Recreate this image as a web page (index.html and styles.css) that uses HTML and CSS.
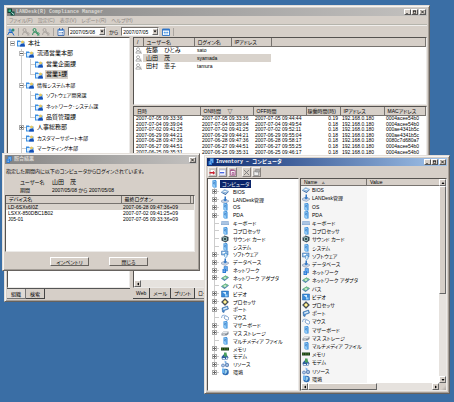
FILE: index.html
```html
<!DOCTYPE html>
<html lang="ja">
<head>
<meta charset="utf-8">
<title>LANDesk(R) Compliance Manager</title>
<link rel="stylesheet" href="styles.css">
</head>
<body>
<svg class="sprite" aria-hidden="true">
  <symbol id="i-dept" viewBox="0 0 16 16"><path d="M0 3h6l1 2h8v10H0z" fill="#3f8fe0"/><path d="M2 6h10v7H2z" fill="#d9efff"/><circle cx="11" cy="6" r="3" fill="#e8c860"/><path d="M6 15q0-6 5-6t5 6z" fill="#1650b8"/></symbol>
  <symbol id="i-user" viewBox="0 0 16 16"><circle cx="7" cy="5" r="3.5" fill="#fff" stroke="#888" stroke-width="1.5"/><path d="M2 14q0-5 5-5t5 5zM13 8v6h3" fill="#fff" stroke="#888" stroke-width="1.5"/></symbol>
  <symbol id="i-logo" viewBox="0 0 16 16"><path d="M1 1h9v9H1z" fill="#103c30"/><path d="M3 3h5v5H3z" fill="#34b890"/><path d="M7 7h8v8H7z" fill="#0b5444"/><path d="M9 9l5 4" stroke="#dff" stroke-width="2"/></symbol>
  <symbol id="i-key" viewBox="0 0 16 16"><path d="M1 14L8 4l2 4 4 7M3 9h7" fill="none" stroke="#2368c4" stroke-width="2"/><circle cx="6" cy="4" r="3" fill="#5698e8"/><circle cx="12" cy="4" r="3" fill="#2c8a78"/></symbol>
  <symbol id="i-people" viewBox="0 0 16 16"><circle cx="5" cy="4" r="3" fill="none" stroke="currentColor" stroke-width="2"/><path d="M1 14q0-6 5-6 3 0 4 4M8 6l5 8M10 14h5M11 9l4 2" fill="none" stroke="currentColor" stroke-width="2"/></symbol>
  <symbol id="i-cal" viewBox="0 0 16 16"><path d="M2 3h12v12H2z" fill="#fff" stroke="#2459a6" stroke-width="1.6"/><path d="M2 3h12v3H2z" fill="#6fa5e0"/><path d="M5 0v4M11 0v4M5 9h2M9 9h3M5 12h2M9 12h3" stroke="#2459a6" stroke-width="1.6"/></symbol>
  <symbol id="i-grid" viewBox="0 0 16 16"><path d="M1 2h14v13H1z" fill="#fff" stroke="#2e74c8" stroke-width="1.8"/><path d="M1 2h14v3H1z" fill="#2e74c8"/><path d="M4 8h3v2H4zM9 8h3v2H9zM4 12h8" fill="#58a0ea" stroke="#58a0ea"/></symbol>
  <symbol id="i-pc" viewBox="0 0 16 16"><path d="M5 1l6-1 2 2v13H7l-2-2z" fill="#2b83d6"/><path d="M5 1l6 1v13l-6-2z" fill="#90caf6"/><path d="M6 4l4 1M6 7l4 1" stroke="#1d5fae" stroke-width="1.2"/></symbol>
  <symbol id="i-bios" viewBox="0 0 16 16"><path d="M0 9l7-6 9 4-7 7z" fill="#2a5c9c"/><path d="M0 8l7-6 9 4-7 6z" fill="#b5d2ec"/><ellipse cx="8" cy="7" rx="4" ry="2" fill="#fff" stroke="#4c86be"/></symbol>
  <symbol id="i-mgmt" viewBox="0 0 16 16"><path d="M1 9l7-3 8 4-7 5-8-3z" fill="#c9d4e4" stroke="#6d84a8"/><path d="M7 1h3v5l2 2-4 3-3-3 2-2z" fill="#3478c6"/></symbol>
  <symbol id="i-keyboard" viewBox="0 0 16 16"><path d="M1 4h14l1 8H0z" fill="#7da3cf"/><path d="M1 6h14M1 8h14M1 10h14M4 4v7M8 4v7M12 4v7" stroke="#e0ecf8" stroke-width=".8"/></symbol>
  <symbol id="i-sound" viewBox="0 0 16 16"><path d="M1 5l6-4 8 3v7l-6 4-8-4z" fill="#364550"/><circle cx="8" cy="8" r="4.5" fill="#8fb4b4"/><circle cx="8" cy="8" r="2" fill="#1c3030"/><path d="M2 5l5-3" stroke="#b9cccc" stroke-width="1.5"/></symbol>
  <symbol id="i-soft" viewBox="0 0 16 16"><path d="M1 2h13v8H1z" fill="#86b7e4" stroke="#2c66a8"/><path d="M3 4h5v3H3z" fill="#fff"/><path d="M7 7h5v7l-3 1-2-2z" fill="#d8ecfa" stroke="#2c7fc4"/></symbol>
  <symbol id="i-net" viewBox="0 0 16 16"><path d="M6 1h7v9H6z" fill="#64aaf0" stroke="#2468b8"/><path d="M3 6h7v8H3z" fill="#2d7cd6"/><path d="M5 8h3M5 11h3" stroke="#d6ebff"/></symbol>
  <symbol id="i-card" viewBox="0 0 16 16"><path d="M0 9l9-6 7 4-9 7z" fill="#4a78b8"/><path d="M1 8l8-5 6 3-8 6z" fill="#74c088"/><path d="M5 8l3-2 3 2-3 2z" fill="#dcf2e0"/></symbol>
  <symbol id="i-video" viewBox="0 0 16 16"><path d="M1 2h14v12H1z" fill="#3a8ad8" stroke="#1f5fa8"/><path d="M3 4h7v6z" fill="#d4ecff"/><path d="M8 9h5v4H8z" fill="#9ad0f8"/></symbol>
  <symbol id="i-cpu" viewBox="0 0 16 16"><path d="M8 1l7 7-7 7-7-7z" fill="#3a4654" stroke="#202c3c"/><path d="M8 4l4 4-4 4-4-4z" fill="#fff2a0" stroke="#c0aa40"/></symbol>
  <symbol id="i-port" viewBox="0 0 16 16"><path d="M2 6l11-4 2 6-8 3-1 4-3-1z" fill="#4b8ed0" stroke="#265a98"/><path d="M4 7l8-3 1 3-8 3z" fill="#d8eaf8"/></symbol>
  <symbol id="i-mouse" viewBox="0 0 16 16"><path d="M1 10q0-7 6-6l3 3" fill="none" stroke="#6896cc" stroke-width="1.5"/><ellipse cx="11" cy="10" rx="5" ry="3.5" transform="rotate(35 11 10)" fill="#fff" stroke="#5a88c0" stroke-width="1.4"/></symbol>
  <symbol id="i-disk" viewBox="0 0 16 16"><path d="M1 9l4-4h10v5l-4 3H1z" fill="#848c96"/><path d="M1 9l4-4h10l-4 4z" fill="#e6e9ec"/><path d="M3 11h5" stroke="#fff"/></symbol>
  <symbol id="i-mem" viewBox="0 0 16 16"><path d="M0 5h16v6H0z" fill="#173c14"/><path d="M1 7h3v2H1zM6 7h3v2H6zM11 7h3v2h-3z" fill="#5c8c34"/></symbol>
  <symbol id="i-modem" viewBox="0 0 16 16"><path d="M1 10l4-5h6l4 6-2 4H2z" fill="#2f5e9c"/><path d="M6 1h5l1 8H6z" fill="#48a05c"/><path d="M3 12h5v2H3zM10 11h3v3h-3z" fill="#e4f0fc"/></symbol>
  <symbol id="i-res" viewBox="0 0 16 16"><path d="M7 1l5 3-4 4z" fill="#78b0e8"/><circle cx="4" cy="11" r="3" fill="#d9e7f8" stroke="#4471b4" stroke-width="1.4"/><circle cx="12" cy="10" r="3.5" fill="#c2d8f2" stroke="#34609c" stroke-width="1.4"/><path d="M4 9v4M12 8v4" stroke="#34609c"/></symbol>
  <symbol id="i-env" viewBox="0 0 16 16"><circle cx="9" cy="8" r="6.5" fill="#2e6cb4"/><path d="M8 3l5 2-2 5-4 3z" fill="#9ed0e8"/><path d="M2 1h5v9H2z" fill="#6db4f0"/></symbol>
  <symbol id="i-export" viewBox="0 0 16 16"><path d="M3 1h8l3 3v11H3z" fill="#fff" stroke="#999"/><path d="M1 7h8V4l5 5-5 4v-3H1z" fill="#c82030"/></symbol>
  <symbol id="i-mail" viewBox="0 0 16 16"><path d="M1 2h14v12H1z" fill="#fff" stroke="#7b8cd8"/><path d="M2 7h10v3H2z" fill="#3c5ce0"/></symbol>
  <symbol id="i-prop" viewBox="0 0 16 16"><path d="M3 3h11v11H3z" fill="#fff" stroke="#8c2a70" stroke-width="1.6"/><path d="M5 0v5M9 0v5M7 8h4v4H7z" stroke="#8c2a70" stroke-width="1.5" fill="none"/></symbol>
  <symbol id="i-cut" viewBox="0 0 16 16"><path d="M2 2l12 12M14 2L2 14" stroke="#777" stroke-width="2"/></symbol>
  <symbol id="i-note" viewBox="0 0 16 16"><path d="M2 5h11v10H2z" fill="#eee" stroke="#777" stroke-width="1.5"/><path d="M6 1h9v6H6z" fill="#aaa" stroke="#777"/></symbol>
  <symbol id="i-plus" viewBox="0 0 5 5"><path d="M0 0h5v5H0z" fill="#aaa"/><path d="M1 1h3v3H1z" fill="#fff"/><path d="M1 2h3v1H1zM2 1h1v3H2z" fill="#666"/></symbol>
  <symbol id="i-minus" viewBox="0 0 5 5"><path d="M0 0h5v5H0z" fill="#bbb"/><path d="M1 1h3v3H1z" fill="#fff"/><path d="M1 2h3v1H1z" fill="#666"/></symbol>
  <symbol id="i-min" viewBox="0 0 8 8"><path d="M1 6h4v1H1z"/></symbol>
  <symbol id="i-max" viewBox="0 0 8 8"><path d="M1 1h6v6H1zM2 3v3h4V3z" fill-rule="evenodd"/></symbol>
  <symbol id="i-close" viewBox="0 0 8 8"><path d="M1 1l6 6M7 1L1 7" stroke="#000" stroke-width="1.5"/></symbol>
  <symbol id="i-left" viewBox="0 0 8 8"><path d="M6 1v6L2 4z"/></symbol>
  <symbol id="i-right" viewBox="0 0 8 8"><path d="M2 1v6l4-3z"/></symbol>
  <symbol id="i-up" viewBox="0 0 8 8"><path d="M1 6h6L4 2z"/></symbol>
  <symbol id="i-down" viewBox="0 0 8 8"><path d="M1 2h6L4 6z"/></symbol>
</svg>

<main class="desktop">
  <section class="window main-window">
    <header class="titlebar">
      <svg class="icon"><use href="#i-logo"/></svg>
      <h1>LANDesk(R) Compliance Manager</h1>
      <button class="cap" aria-label="最小化"><svg><use href="#i-min"/></svg></button>
      <button class="cap" aria-label="最大化"><svg><use href="#i-max"/></svg></button>
      <button class="cap cap-close" aria-label="閉じる"><svg><use href="#i-close"/></svg></button>
    </header>
    <nav class="menu">
      <button>ファイル(F)</button><button>設定(C)</button><button>表示(V)</button><button>レポート(R)</button><button>ヘルプ(H)</button>
    </nav>
    <div class="toolbar">
      <button class="tool" aria-label="ログイン"><svg class="icon"><use href="#i-key"/></svg></button>
      <i class="sep"></i>
      <button class="tool off" aria-label="ユーザー"><svg class="icon"><use href="#i-people"/></svg></button>
      <button class="tool green" aria-label="追加"><svg class="icon"><use href="#i-people"/></svg></button>
      <button class="tool off" aria-label="削除"><svg class="icon"><use href="#i-people"/></svg></button>
      <i class="sep"></i>
      <button class="tool" aria-label="カレンダー"><svg class="icon"><use href="#i-cal"/></svg></button>
      <span class="date"><select aria-label="開始日"><option>2007/05/08</option></select><svg><use href="#i-down"/></svg></span>
      <span class="between">から</span>
      <span class="date"><select aria-label="終了日"><option>2007/07/05</option></select><svg><use href="#i-down"/></svg></span>
      <button class="tool" aria-label="表示"><svg class="icon"><use href="#i-grid"/></svg></button>
      <i class="sep"></i>
    </div>
    <div class="panes">
      <div class="side">
        <div class="sunken side-body"><ul class="org" id="org"></ul></div>
        <div class="tabs"><button class="on">組織</button><button>検索</button></div>
      </div>
      <div class="content">
        <div class="sunken users">
          <table>
            <colgroup><col class="u0"><col class="u1"><col class="u2"><col class="u3"><col></colgroup>
            <thead><tr><th>/</th><th>ユーザー名</th><th>ログイン名</th><th>IPアドレス</th><th></th></tr></thead>
            <tbody>
              <tr><td><svg class="icon"><use href="#i-user"/></svg></td><td>佐藤　ひとみ</td><td>sato</td><td></td><td></td></tr>
              <tr class="picked"><td><svg class="icon"><use href="#i-user"/></svg></td><td>山田　茂</td><td>syamada</td><td></td><td></td></tr>
              <tr><td><svg class="icon"><use href="#i-user"/></svg></td><td>田村　恵子</td><td>tamura</td><td></td><td></td></tr>
            </tbody>
          </table>
        </div>
        <div class="sunken logs">
          <table>
            <colgroup><col class="l0"><col class="l1"><col class="l1"><col class="l3"><col class="l4"><col></colgroup>
            <thead><tr><th>日時</th><th>ON時間　 ▽</th><th>OFF時間</th><th>稼働時間(時)</th><th>IPアドレス</th><th>MACアドレス</th></tr></thead>
            <tbody id="logs"></tbody>
          </table>
          <div class="hscroll"><button aria-label="左へ"><svg><use href="#i-left"/></svg></button></div>
        </div>
        <div class="tabs"><button>Web</button><button>メール</button><button>プリント</button><button class="on">ログイン</button></div>
      </div>
    </div>
  </section>

  <section class="window dialog">
    <header class="titlebar">
      <svg class="icon"><use href="#i-net"/></svg>
      <h2>照合結果</h2>
      <button class="cap cap-close" aria-label="閉じる"><svg><use href="#i-close"/></svg></button>
    </header>
    <p>指定した期間内に以下のコンピュータからログインされています。</p>
    <dl><dt>ユーザー名</dt><dd>山田　茂</dd><dt>期間</dt><dd class="period">2007/05/08 から 2007/05/08</dd></dl>
    <div class="sunken devices">
      <table>
        <colgroup><col class="d0"><col class="d1"><col></colgroup>
        <thead><tr><th>デバイス名</th><th>最終ログオン</th><th></th></tr></thead>
        <tbody>
          <tr class="picked"><td>LD-6SXs6I0Z</td><td colspan="2">2007-06-28 09:47:36+09</td></tr>
          <tr><td>LSXX-850DBC1B02</td><td colspan="2">2007-07-02 09:41:25+09</td></tr>
          <tr><td>J05-01</td><td colspan="2">2007-07-05 09:33:36+09</td></tr>
        </tbody>
      </table>
    </div>
    <footer><button>インベントリ</button><button>閉じる</button></footer>
  </section>

  <section class="window inventory">
    <header class="titlebar active">
      <svg class="icon"><use href="#i-net"/></svg>
      <h2>Inventory − コンピュータ</h2>
      <button class="cap" aria-label="最小化"><svg><use href="#i-min"/></svg></button>
      <button class="cap" aria-label="最大化"><svg><use href="#i-max"/></svg></button>
      <button class="cap cap-close" aria-label="閉じる"><svg><use href="#i-close"/></svg></button>
    </header>
    <div class="inv-tools">
      <button aria-label="エクスポート"><svg class="icon"><use href="#i-export"/></svg></button>
      <button aria-label="メール"><svg class="icon"><use href="#i-mail"/></svg></button>
      <button aria-label="印刷"><svg class="icon"><use href="#i-prop"/></svg></button>
      <button class="apart" aria-label="削除"><svg class="icon"><use href="#i-cut"/></svg></button>
      <button aria-label="プロパティ"><svg class="icon"><use href="#i-note"/></svg></button>
    </div>
    <div class="inv-panes">
      <div class="sunken inv-left"><ul class="inv-tree" id="invTree"></ul></div>
      <div class="sunken inv-right">
        <div class="inv-list">
          <div class="inv-head"><span>Name　▵</span><span>Value</span></div>
          <ul id="invList"></ul>
        </div>
        <div class="vscroll"><button aria-label="上へ"><svg><use href="#i-up"/></svg></button><i></i><b></b><button aria-label="下へ"><svg><use href="#i-down"/></svg></button></div>
        <div class="hscroll"><button aria-label="左へ"><svg><use href="#i-left"/></svg></button><i></i><b></b><button aria-label="右へ"><svg><use href="#i-right"/></svg></button></div>
        <div class="grip"></div>
      </div>
    </div>
  </section>
</main>
<script src="script.js"></script>
</body>
</html>
```
FILE: styles.css
```css
* { box-sizing: border-box; margin: 0; padding: 0; }
body {
  background: #3a6ea5;
  color: #000;
  font: 5px/6px "Liberation Sans", "Noto Sans CJK JP", sans-serif;
  font-feature-settings: "palt";
  overflow: hidden;
}
button, select { font: inherit; color: inherit; border: 0; background: none; }
ul { list-style: none; }
h1, h2 { font: bold 5px/7px "Liberation Mono", "Noto Sans CJK JP", monospace; }
table { width: 100%; border-collapse: collapse; table-layout: fixed; }
th, td { text-align: left; font-weight: normal; white-space: nowrap; overflow: hidden; }
.sprite { position: absolute; width: 0; height: 0; }
.icon { width: 8px; height: 8px; flex: none; display: block; }
.desktop { position: relative; height: 100vh; }

.window {
  position: absolute;
  display: flex;
  flex-direction: column;
  background: #d6cfc8;
  border: 1px solid;
  border-color: #e4dfda #66625e #66625e #e4dfda;
  box-shadow: inset 1px 1px #f6f4f2, inset -1px -1px #a39d97;
  padding: 2px;
}
.main-window { left: 4px; top: 5px; width: 426px; height: 297px; }
.dialog { left: 2px; top: 153px; width: 198px; height: 118px; padding: 1px 2px; }
.inventory { left: 204px; top: 155px; width: 246px; height: 239px; }

.titlebar {
  display: flex;
  align-items: center;
  height: 8px;
  flex: none;
  background: linear-gradient(90deg, #858483, #a5a4a3 50%, #c3c1bf);
  color: #dad7d3;
}
.titlebar.active { background: linear-gradient(90deg, #0c2a70, #a2c4ea); color: #fff; }
.dialog .titlebar { height: 9px; }
.titlebar h1, .titlebar h2 { flex: 1; margin-left: 1px; white-space: nowrap; }
.cap { width: 7px; height: 6px; display: grid; place-items: center; background: #d6cfc8; border: 1px solid; border-color: #fff #555 #555 #fff; }
.cap svg { width: 5px; height: 4px; }
.cap-close { margin: 0 1px; }

.menu { display: flex; gap: 5px; padding: 1px 2px; height: 9px; flex: none; color: #8e8984; border-bottom: 1px solid #b5b4ac; }
.toolbar { display: flex; align-items: center; gap: 2px; height: 12px; flex: none; border-top: 1px solid #f0eeec; }
.tool { width: 8px; height: 8px; }
.off { color: #aaa5a0; }
.green { color: #2f9160; }
.sep { width: 1px; height: 8px; margin: 0 1px; background: #aaa5a0; }
.date { position: relative; width: 38px; height: 9px; margin: 0 1px; background: #fff; border: 1px solid; border-color: #77736f #eee #eee #77736f; }
.date select { appearance: none; display: block; width: 100%; height: 7px; padding-left: 1px; line-height: 6px; }
.date svg { position: absolute; right: 0; top: 0; width: 6px; height: 7px; background: #d6cfc8; border: 1px solid; border-color: #fff #666 #666 #fff; pointer-events: none; }
.between { white-space: nowrap; }

.sunken { background: #fff; border: 1px solid; border-color: #55524f #eceae8 #eceae8 #55524f; overflow: hidden; }
.panes { display: flex; gap: 3px; flex: 1; min-height: 0; }
.side { width: 123px; display: flex; flex-direction: column; }
.side-body { flex: 1; }
.content { flex: 1; min-width: 0; display: flex; flex-direction: column; }
.tabs { display: flex; height: 11px; flex: none; }
.side .tabs { border-top: 1px solid #555; }
.tabs button { padding: 0 3px; border: solid #444; border-width: 0 1px 1px 0; }
.side .tabs button { padding: 0 4px; }
.tabs .on { border-color: #777; background: #e0dbd6; }

.org { display: grid; grid-auto-rows: 1fr; height: 116px; }
.org li, .inv-tree li { display: flex; align-items: stretch; min-height: 0; }
.org .icon, .inv-tree .icon { align-self: center; }
.org .label { align-self: center; margin-left: 2px; padding: 1px; font-size: 6px; line-height: 7px; white-space: nowrap; }
.org .small { font-size: 5px; }
.cell { width: 9px; flex: none; display: grid; place-items: center; background: 4px 0 / 1px 100% no-repeat; }
.cell svg { width: 5px; height: 5px; }
.line { background-image: linear-gradient(#ccc, #ccc); }
.tee { background: linear-gradient(#ccc, #ccc) 4px 0 / 1px 100% no-repeat, linear-gradient(#ccc, #ccc) 4px 50% / 5px 1px no-repeat; }
.end { background: linear-gradient(#ccc, #ccc) 4px 0 / 1px 50% no-repeat, linear-gradient(#ccc, #ccc) 4px 50% / 5px 1px no-repeat; }
.label.chosen { background: #d6cfc8; }

thead th { height: 8px; padding-left: 3px; background: #d6cfc8; border-right: 1px solid #77736f; border-bottom: 1px solid #77736f; }
.users { height: 68px; flex: none; }
.users td { height: 8px; padding-left: 3px; line-height: 7px; }
.users td:nth-child(2) { font-size: 6px; }
.users td:first-child { padding-left: 1px; }
.users .icon { width: 7px; height: 7px; }
.u0 { width: 9px; } .u1 { width: 51px; } .u2 { width: 37px; } .u3 { width: 40px; }
.picked td { background: #d9d3cc; }
.users .picked td:last-child, .users .picked td:first-child { background: none; }
.logs { flex: 1; margin-top: 1px; display: flex; flex-direction: column; }
.logs table { height: 48px; }
.logs tbody td { padding-left: 2px; line-height: 5px; }
.logs td:nth-child(4) { text-align: right; padding-right: 2px; }
.l0 { width: 66px; } .l1 { width: 53px; } .l3 { width: 34px; } .l4 { width: 44px; }
.logs th:nth-child(4) { padding-left: 1px; }

.hscroll { display: flex; height: 7px; margin-top: auto; background: #e6e2de; }
.hscroll button, .vscroll button, .hscroll i, .vscroll i {
  width: 7px; height: 7px; display: grid; place-items: center; flex: none;
  background: #d6cfc8; border: 1px solid; border-color: #fff #666 #666 #fff;
}
.hscroll svg, .vscroll svg { width: 4px; height: 4px; }
.hscroll b, .vscroll b { flex: 1; }
.hscroll i { width: 50%; }
.vscroll { display: flex; flex-direction: column; background: #e6e2de; }
.vscroll i { height: 53%; }

.dialog p { margin: 4px 1px 0; line-height: 7px; }
.dialog dl { display: grid; grid-template-columns: 32px 1fr; row-gap: 1px; margin: 4px 15px 1px; line-height: 7px; }
.dialog dd { font-size: 6px; }
.dialog .period { font-size: 5px; }
.devices { flex: 1; margin: 0 2px 0 0; }
.devices th { height: 7px; }
.devices td { height: 6px; padding-left: 2px; }
.d0 { width: 115px; } .d1 { width: 69px; }
.dialog footer { display: flex; gap: 20px; padding: 5px 45px 3px; }
.dialog footer button { width: 39px; height: 9px; border: 1px solid; border-color: #fff #66625e #66625e #fff; }

.inv-tools { display: flex; gap: 1px; padding: 1px; height: 12px; flex: none; }
.inv-tools button { width: 9px; height: 10px; display: grid; place-items: center; border: 1px solid; border-color: #f4f2f0 #88837f #88837f #f4f2f0; }
.inv-tools .icon { width: 7px; height: 7px; }
.inv-tools .apart { margin-left: 4px; }
.inv-panes { display: flex; gap: 1px; flex: 1; min-height: 0; }
.inv-left { width: 92px; }
.inv-tree { display: grid; grid-auto-rows: 1fr; height: 196px; margin: 1px 2px; }
.inv-tree .label { align-self: center; margin-left: 4px; white-space: nowrap; }
.inv-tree .root .label { margin-left: 2px; padding: 1px 2px; background: #0a246a; color: #fff; }
.inv-tree .cell { margin-right: 2px; }
.inv-right { flex: 1; min-width: 0; display: grid; grid-template: 1fr 7px / 1fr 7px; }
.inv-list { min-height: 0; overflow: hidden; }
.inv-head { display: grid; grid-template-columns: 66px 1fr; height: 7px; background: #d6cfc8; border-bottom: 1px solid #77736f; }
.inv-head span { padding-left: 3px; }
.inv-head span:first-child { border-right: 1px solid #77736f; }
.inv-list ul { display: grid; grid-auto-rows: 1fr; width: 66px; height: 197px; padding-left: 1px; background: #f5f5f5; }
.inv-list li { display: flex; align-items: center; gap: 2px; white-space: nowrap; }
.grip { background: linear-gradient(135deg, #d6cfc8 60%, #aaa5a0); }
```
FILE: script.js
```js
const icon = (name) => `<svg class="icon"><use href="#i-${name}"/></svg>`;

// [label, connector classes, expander, label class]
const departments = [
  ['本社', [''], 'minus', ''],
  ['流通営業本部', ['', 'tee'], 'minus', ''],
  ['営業企画課', ['', 'line', 'tee'], '', ''],
  ['営業1課', ['', 'line', 'end'], '', 'chosen'],
  ['情報システム本部', ['', 'tee'], 'minus', 'small'],
  ['ソフトウェア開発課', ['', 'line', 'tee'], '', 'small'],
  ['ネットワーク･システム課', ['', 'line', 'tee'], '', 'small'],
  ['品質管理課', ['', 'line', 'end'], '', ''],
  ['人事総務部', ['', 'tee'], 'plus', ''],
  ['カスタマーサポート本部', ['', 'tee'], '', 'small'],
  ['マーケティング本部', ['', 'tee'], '', 'small'],
];
document.getElementById('org').innerHTML = departments.map(([label, cells, exp, cls]) =>
  '<li>' + cells.map((c, i) => `<span class="cell ${c}">${
    exp && i === cells.length - 1 ? `<svg><use href="#i-${exp}"/></svg>` : ''}</span>`).join('') +
  icon('dept') + `<span class="label ${cls}">${label}</span></li>`).join('');

const logs = [
  ['07-05', '09:33:36', '09:44:44', '0.19', '0004acee54b0'],
  ['07-04', '09:39:04', '09:49:54', '0.18', '0004acee54b0'],
  ['07-02', '09:41:25', '09:52:11', '0.18', '000ae4341b5c'],
  ['06-29', '09:44:21', '09:55:04', '0.18', '000ae4341b5c'],
  ['06-28', '09:47:36', '09:58:17', '0.18', '0080c7d680a7'],
  ['06-27', '09:44:51', '09:55:25', '0.18', '0004acee54b0'],
  ['06-25', '09:35:31', '09:46:17', '0.18', '0004acee54b0'],
];
document.getElementById('logs').innerHTML = logs.map(([d, on, off, h, mac]) =>
  `<tr><td>2007-${d} ${on}</td><td>2007-${d} ${on}</td><td>2007-${d} ${off}</td>` +
  `<td>${h}</td><td>192.168.0.180</td><td>${mac}</td></tr>`).join('');

// [label, icon, expandable]
const items = [
  ['BIOS', 'bios', 1], ['LANDesk管理', 'mgmt', 1], ['OS', 'pc', 1], ['PDA', 'pc', 1],
  ['キーボード', 'keyboard', 0], ['コプロセッサ', 'pc', 0], ['サウンド カード', 'sound', 0],
  ['システム', 'pc', 0], ['ソフトウェア', 'soft', 1], ['データベース', 'mgmt', 1],
  ['ネットワーク', 'net', 1], ['ネットワーク アダプタ', 'card', 1], ['バス', 'card', 0],
  ['ビデオ', 'video', 1], ['プロセッサ', 'cpu', 1], ['ポート', 'port', 1], ['マウス', 'mouse', 0],
  ['マザーボード', 'pc', 1], ['マス ストレージ', 'disk', 1], ['マルチメディア ファイル', 'pc', 0],
  ['メモリ', 'mem', 1], ['モデム', 'modem', 1], ['リソース', 'res', 1], ['環境', 'env', 1],
];
document.getElementById('invTree').innerHTML =
  `<li class="root">${icon('pc')}<span class="label">コンピュータ</span></li>` +
  items.map(([label, pic, open], i) =>
    `<li><span class="cell ${i === items.length - 1 ? 'end' : 'tee'}">${
      open ? '<svg><use href="#i-plus"/></svg>' : ''}</span>${icon(pic)}<span class="label">${label}</span></li>`).join('');
document.getElementById('invList').innerHTML =
  items.map(([label, pic]) => `<li>${icon(pic)}<span>${label}</span></li>`).join('');
```
